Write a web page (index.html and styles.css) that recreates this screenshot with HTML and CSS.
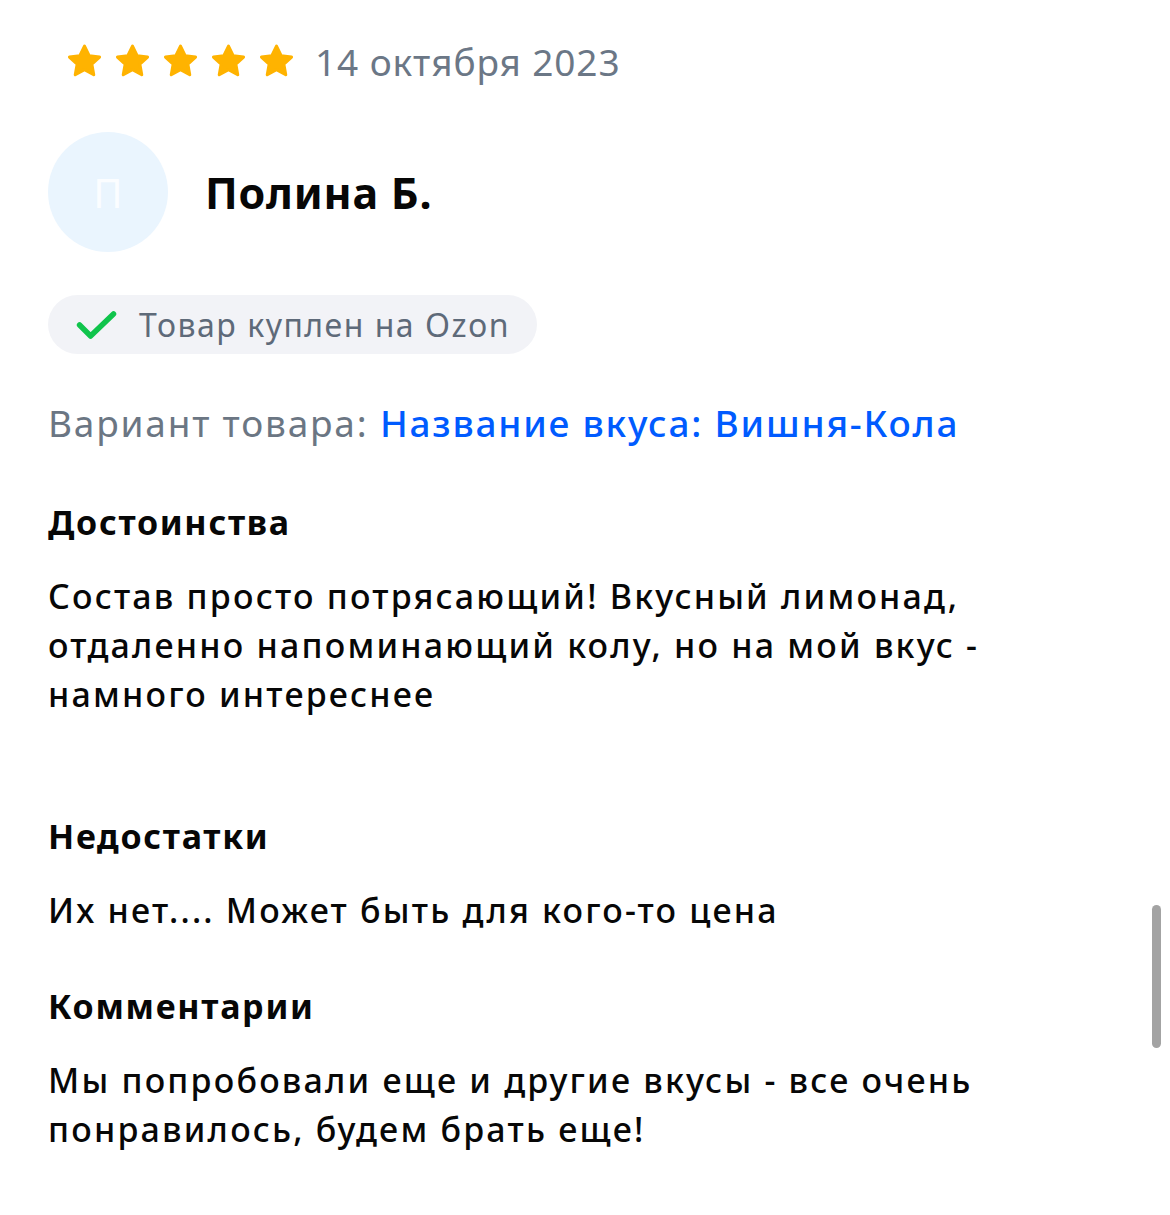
FILE: index.html
```html
<!DOCTYPE html>
<html lang="ru">
<head>
<meta charset="utf-8">
<title>Отзыв</title>
<link rel="stylesheet" href="styles.css">
</head>
<body>
<div class="review">
  <div class="rating-row">
    <div class="stars">
      <svg class="star" viewBox="0 0 24 24"><path d="M12 3l2.7 5.6 6.1.8-4.5 4.2 1.1 6.1L12 16.8l-5.4 2.9 1.1-6.1-4.5-4.2 6.1-.8z"/></svg>
      <svg class="star" viewBox="0 0 24 24"><path d="M12 3l2.7 5.6 6.1.8-4.5 4.2 1.1 6.1L12 16.8l-5.4 2.9 1.1-6.1-4.5-4.2 6.1-.8z"/></svg>
      <svg class="star" viewBox="0 0 24 24"><path d="M12 3l2.7 5.6 6.1.8-4.5 4.2 1.1 6.1L12 16.8l-5.4 2.9 1.1-6.1-4.5-4.2 6.1-.8z"/></svg>
      <svg class="star" viewBox="0 0 24 24"><path d="M12 3l2.7 5.6 6.1.8-4.5 4.2 1.1 6.1L12 16.8l-5.4 2.9 1.1-6.1-4.5-4.2 6.1-.8z"/></svg>
      <svg class="star" viewBox="0 0 24 24"><path d="M12 3l2.7 5.6 6.1.8-4.5 4.2 1.1 6.1L12 16.8l-5.4 2.9 1.1-6.1-4.5-4.2 6.1-.8z"/></svg>
    </div>
    <span class="date">14 октября 2023</span>
  </div>

  <div class="author">
    <div class="avatar">П</div>
    <div class="name">Полина Б.</div>
  </div>

  <div class="badge">
    <svg class="check" viewBox="0 0 48 32"><path d="M5 16l12 12L42 4"/></svg>
    <span>Товар куплен на Ozon</span>
  </div>

  <div class="variant">Вариант товара: <span class="variant-link">Название вкуса: Вишня-Кола</span></div>

  <div class="section">
    <div class="section-title">Достоинства</div>
    <div class="section-text extra">Состав просто потрясающий! Вкусный лимонад, отдаленно напоминающий колу, но на мой вкус - намного интереснее</div>
  </div>

  <div class="section">
    <div class="section-title">Недостатки</div>
    <div class="section-text">Их нет.... Может быть для кого-то цена</div>
  </div>

  <div class="section">
    <div class="section-title">Комментарии</div>
    <div class="section-text">Мы попробовали еще и другие вкусы - все очень понравилось, будем брать еще!</div>
  </div>
</div>
<div class="scrollbar"></div>
</body>
</html>
```

FILE: styles.css
```css
html, body {
  margin: 0;
  padding: 0;
  background: #ffffff;
}
body {
  font-family: "Noto Sans", "Open Sans", sans-serif;
  color: #070707;
  width: 1170px;
  height: 1215px;
  overflow: hidden;
  position: relative;
}
.review {
  padding: 40px 0 0 48px;
  width: 1000px;
}
.rating-row {
  display: flex;
  align-items: center;
  height: 42px;
}
.stars {
  display: flex;
  gap: 7px;
  margin-left: 16px;
}
.star {
  width: 41px;
  height: 41px;
  display: block;
}
.star path {
  fill: #ffb300;
  stroke: #ffb300;
  stroke-width: 1.8;
  stroke-linejoin: round;
}
.date {
  margin-left: 18px;
  font-size: 37px;
  color: #6b7786;
  letter-spacing: 0.9px;
}
.author {
  display: flex;
  align-items: center;
  margin-top: 50px;
  gap: 37px;
}
.avatar {
  width: 120px;
  height: 120px;
  border-radius: 50%;
  background: #eaf5fe;
  color: #fbfdff;
  font-size: 40px;
  display: flex;
  align-items: center;
  justify-content: center;
}
.name {
  font-size: 43px;
  font-weight: 700;
  color: #070707;
  letter-spacing: 0.8px;
}
.badge {
  display: inline-flex;
  align-items: center;
  margin-top: 43px;
  height: 59px;
  padding: 0 27px;
  border-radius: 30px;
  background: #f2f3f7;
  font-size: 32px;
  color: #5e6a79;
  gap: 20px;
  letter-spacing: 1.5px;
}
.check {
  width: 44px;
  height: 30px;
  display: block;
}
.check path {
  fill: none;
  stroke: #10c44c;
  stroke-width: 6;
  stroke-linecap: round;
  stroke-linejoin: round;
}
.variant {
  margin-top: 44px;
  font-size: 37px;
  line-height: 50px;
  color: #6b7683;
  letter-spacing: 1.8px;
}
.variant-link {
  color: #005bff;
  font-weight: 500;
}
.section {
  margin-top: 52px;
}
.section + .section {
  margin-top: 49px;
}
.section-title {
  font-size: 34px;
  font-weight: 700;
  line-height: 44px;
  letter-spacing: 1.7px;
}
.section-text {
  margin-top: 28px;
  font-size: 34px;
  font-weight: 500;
  line-height: 49px;
  letter-spacing: 2.2px;
  width: 960px;
}
.section-text.extra {
  padding-bottom: 46px;
}
.scrollbar {
  position: absolute;
  left: 1152px;
  top: 905px;
  width: 9px;
  height: 143px;
  border-radius: 5px;
  background: #a3a3a3;
}
```
